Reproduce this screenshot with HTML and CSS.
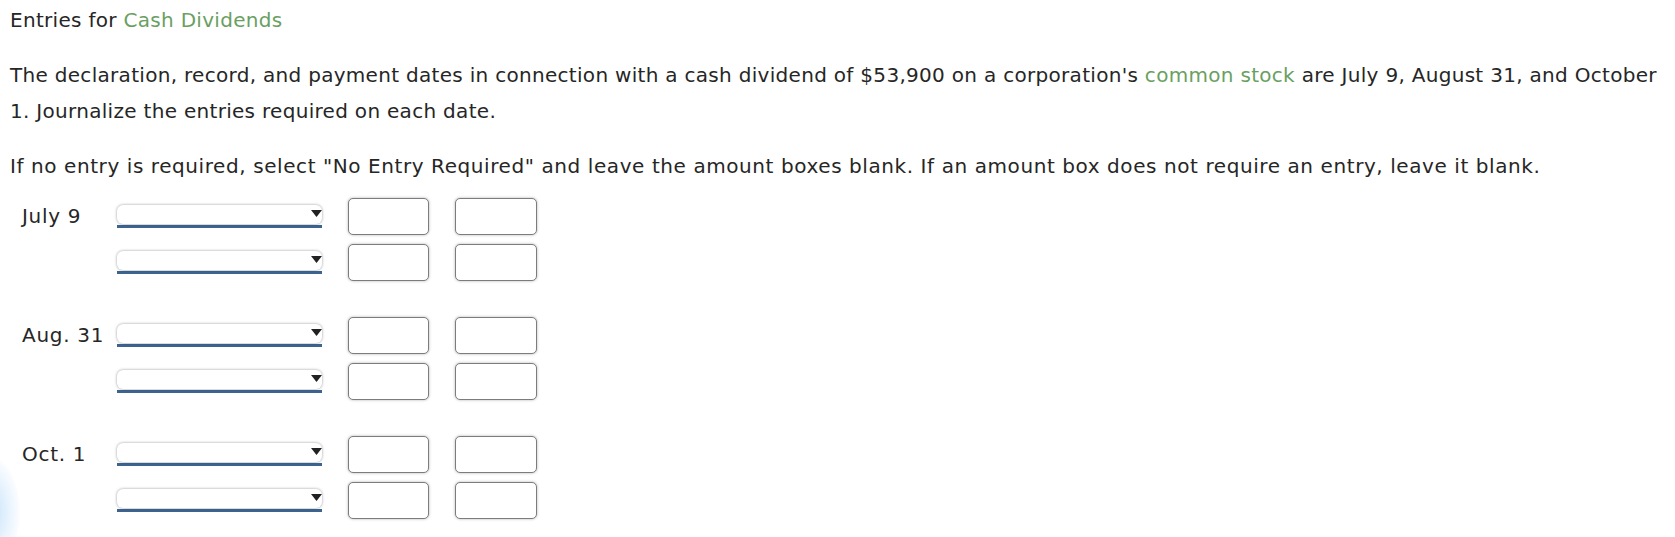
FILE: index.html
```html
<!DOCTYPE html>
<html lang="en">
<head>
<meta charset="utf-8">
<title>Entries for Cash Dividends</title>
<link rel="stylesheet" href="styles.css">
</head>
<body>
<div class="page">
  <p class="title">Entries for <span class="term">Cash Dividends</span></p>
  <p class="para">The declaration, record, and payment dates in connection with a cash dividend of $53,900 on a corporation's <span class="term">common stock</span> are July 9, August 31, and October 1. Journalize the entries required on each date.</p>
  <p class="para para-wide">If no entry is required, select "No Entry Required" and leave the amount boxes blank. If an amount box does not require an entry, leave it blank.</p>

  <div class="journal">
    <div class="group">
      <div class="row">
        <span class="date">July 9</span>
        <span class="select"><select aria-label="Account"><option></option></select><svg class="caret" viewBox="0 0 11 7" width="11" height="7"><path d="M0 0h11L5.5 7z" fill="#222"/></svg></span>
        <input class="amount" type="text" aria-label="Debit">
        <input class="amount" type="text" aria-label="Credit">
      </div>
      <div class="row">
        <span class="date"></span>
        <span class="select"><select aria-label="Account"><option></option></select><svg class="caret" viewBox="0 0 11 7" width="11" height="7"><path d="M0 0h11L5.5 7z" fill="#222"/></svg></span>
        <input class="amount" type="text" aria-label="Debit">
        <input class="amount" type="text" aria-label="Credit">
      </div>
    </div>
    <div class="group">
      <div class="row">
        <span class="date">Aug. 31</span>
        <span class="select"><select aria-label="Account"><option></option></select><svg class="caret" viewBox="0 0 11 7" width="11" height="7"><path d="M0 0h11L5.5 7z" fill="#222"/></svg></span>
        <input class="amount" type="text" aria-label="Debit">
        <input class="amount" type="text" aria-label="Credit">
      </div>
      <div class="row">
        <span class="date"></span>
        <span class="select"><select aria-label="Account"><option></option></select><svg class="caret" viewBox="0 0 11 7" width="11" height="7"><path d="M0 0h11L5.5 7z" fill="#222"/></svg></span>
        <input class="amount" type="text" aria-label="Debit">
        <input class="amount" type="text" aria-label="Credit">
      </div>
    </div>
    <div class="group">
      <div class="row">
        <span class="date">Oct. 1</span>
        <span class="select"><select aria-label="Account"><option></option></select><svg class="caret" viewBox="0 0 11 7" width="11" height="7"><path d="M0 0h11L5.5 7z" fill="#222"/></svg></span>
        <input class="amount" type="text" aria-label="Debit">
        <input class="amount" type="text" aria-label="Credit">
      </div>
      <div class="row">
        <span class="date"></span>
        <span class="select"><select aria-label="Account"><option></option></select><svg class="caret" viewBox="0 0 11 7" width="11" height="7"><path d="M0 0h11L5.5 7z" fill="#222"/></svg></span>
        <input class="amount" type="text" aria-label="Debit">
        <input class="amount" type="text" aria-label="Credit">
      </div>
    </div>
  </div>
  <div class="glow"></div>
</div>
</body>
</html>
```

FILE: styles.css
```css
html, body {
  margin: 0;
  padding: 0;
  background: #ffffff;
}

.page {
  position: relative;
  min-height: 537px;
  box-sizing: border-box;
  padding: 2px 0 0 10px;
  font-family: "DejaVu Sans", Verdana, sans-serif;
  font-size: 20px;
  line-height: 36.7px;
  letter-spacing: 0.3px;
  color: #262626;
  overflow: hidden;
}

.title {
  margin: 0;
}

.para {
  margin: 18px 0 0;
}

.para-wide {
  letter-spacing: 0.58px;
}

.term {
  color: #6a9f62;
}

.journal {
  margin-top: 13px;
  display: flex;
  flex-direction: column;
  gap: 36px;
}

.group {
  display: flex;
  flex-direction: column;
  gap: 9px;
}

.row {
  display: grid;
  grid-template-columns: 69px 205px 81px 82px;
  column-gap: 26px;
  align-items: center;
  height: 37px;
  padding-left: 12px;
}

.date {
  white-space: nowrap;
  line-height: 20px;
  letter-spacing: 0.7px;
}

.select {
  position: relative;
  display: block;
  height: 23px;
  box-sizing: border-box;
  border-bottom: 3px solid #3d6491;
}

.select select {
  appearance: none;
  -webkit-appearance: none;
  display: block;
  width: 100%;
  height: 19px;
  margin: 0;
  padding: 0;
  border: none;
  border-radius: 6px;
  background: #ffffff;
  box-shadow: 0 0 3px rgba(0, 0, 0, 0.4);
  font: inherit;
  font-size: 14px;
}

.caret {
  position: absolute;
  right: 0;
  top: 5px;
}

.amount {
  display: block;
  width: 100%;
  height: 37px;
  box-sizing: border-box;
  margin: 0;
  padding: 0 6px;
  border: 1px solid #7c7c7c;
  border-radius: 5px;
  background: #ffffff;
  box-shadow: 0 0 3px rgba(0, 0, 0, 0.3);
  font: inherit;
  font-size: 16px;
}

.glow {
  position: absolute;
  left: -40px;
  bottom: -30px;
  width: 60px;
  height: 110px;
  border-radius: 50%;
  background: radial-gradient(ellipse at center, rgba(190, 222, 250, 0.9) 0%, rgba(210, 232, 252, 0.5) 45%, rgba(255, 255, 255, 0) 75%);
  pointer-events: none;
}
```
